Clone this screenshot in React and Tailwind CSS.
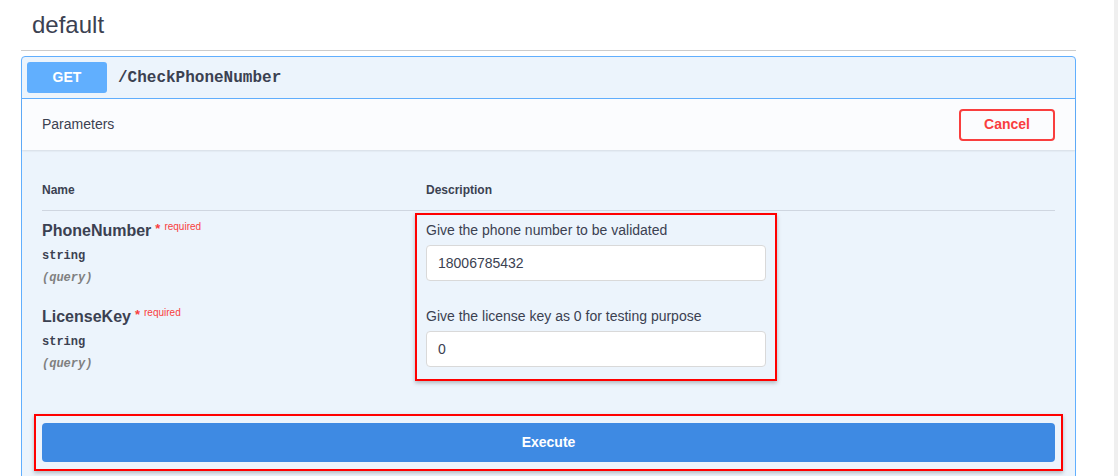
export default function App() {
  const sans = { fontFamily: '"Liberation Sans", Arial, sans-serif' };
  const mono = { fontFamily: '"Liberation Mono", "Courier New", monospace' };
  return (
    <div className="flex w-[1118px] h-[476px] overflow-hidden bg-white text-[#3b4151]" style={sans}>
      <div className="flex-1 pl-[21px] pr-[38px]">
        <div className="h-[51px] border-b border-[#cccccc] pl-[11px] pt-[10px] text-[24px] leading-[30px]">default</div>
        <div className="mt-[5px] rounded-[4px] border border-[#61affe] bg-[#ecf4fc] pb-[40px]">
          {/* header */}
          <div className="flex items-center h-[42px] px-[5px] border-b border-[#61affe]">
            <div className="w-[80px] h-[31px] rounded-[3px] bg-[#61affe] text-white font-bold text-[14px] flex items-center justify-center">GET</div>
            <div className="ml-[11px] font-bold text-[16px]" style={mono}>/CheckPhoneNumber</div>
          </div>
          {/* parameters bar */}
          <div className="flex items-center justify-between h-[51px] px-[20px] bg-[#fbfcfe] shadow-[0_1px_2px_rgba(0,0,0,0.1)]">
            <div className="text-[14px]">Parameters</div>
            <button className="w-[96px] h-[32px] rounded-[4px] border-2 border-[#f93e3e] text-[#f93e3e] font-bold text-[14px] bg-transparent">Cancel</button>
          </div>
          {/* table */}
          <div className="px-[20px] pt-[30px]">
            <div className="flex h-[31px] border-b border-[#cfd6e0] text-[12px] font-bold">
              <div className="w-[384px] leading-[20px]">Name</div>
              <div className="leading-[20px]">Description</div>
            </div>
            <div className="flex">
              <div className="w-[373px]">
                {['PhoneNumber', 'LicenseKey'].map((n, i) => (
                  <div key={n} className={i === 0 ? 'pt-[10px] h-[96px]' : 'h-[86px]'}>
                    <div className="flex items-start h-[20px]">
                      <span className="text-[16px] font-bold leading-[20px]">{n}</span>
                      <span className="ml-[4px] text-[#f93e3e] text-[13px] font-bold leading-[16px]">*</span>
                      <span className="ml-[4px] text-[#f93e3e] text-[10px] leading-[12px]">required</span>
                    </div>
                    <div className="mt-[7px] text-[12px] font-bold leading-[16px]" style={mono}>string</div>
                    <div className="mt-[6px] text-[12px] font-bold italic text-[#808080] leading-[16px]" style={mono}>(query)</div>
                  </div>
                ))}
              </div>
              <div className="mt-[2px] w-[362px] h-[168px] border-2 border-[#ff0000] pl-[9px] pr-[9px] pt-[5px] shadow-[0_2px_4px_rgba(0,0,0,0.25)]">
                <div className="text-[14px] leading-[20px]">Give the phone number to be validated</div>
                <div className="mt-[5px] h-[36px] rounded-[4px] border border-[#d9d9d9] bg-white flex items-center pl-[11px] text-[14px]">18006785432</div>
                <div className="mt-[25px] text-[14px] leading-[20px]">Give the license key as 0 for testing purpose</div>
                <div className="mt-[5px] h-[36px] rounded-[4px] border border-[#d9d9d9] bg-white flex items-center pl-[11px] text-[14px]">0</div>
              </div>
            </div>
            <div className="mt-[21px] -mx-[8px] border-2 border-[#ff0000] px-[6px] pt-[7px] pb-[7px] shadow-[0_2px_4px_rgba(0,0,0,0.25)]">
              <button className="w-full h-[39px] rounded-[4px] bg-[#3e8ae3] text-white font-bold text-[14px]">Execute</button>
            </div>
          </div>
        </div>
      </div>
      <div className="w-[4px] bg-[#efefef]" />
    </div>
  );
}
